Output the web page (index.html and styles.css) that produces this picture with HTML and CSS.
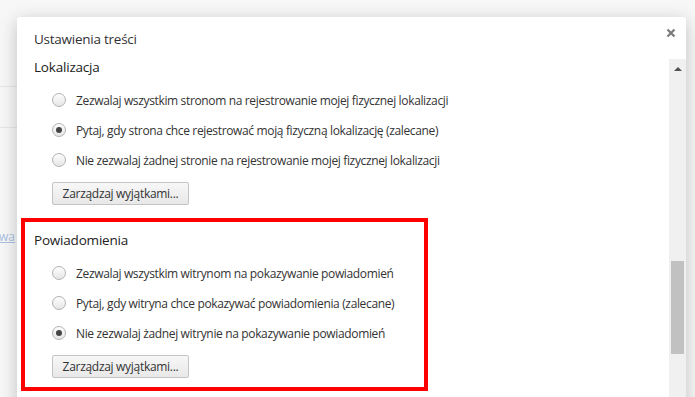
FILE: index.html
```html
<!DOCTYPE html>
<html lang="pl">
<head>
    <meta charset="UTF-8">
    <meta name="viewport" content="width=device-width, initial-scale=1.0">
    <title>Ustawienia treści</title>
    <link rel="stylesheet" href="styles.css">
</head>
<body>
    <div class="page">
        <div class="page-rule rule-1"></div>
        <div class="page-rule rule-2"></div>
        <a class="page-link" href="#">wa</a>
    </div>

    <div class="dialog">
        <div class="dialog-head">
            <h2>Ustawienia treści</h2>
            <button class="close" title="Zamknij">
                <svg width="10" height="10" viewBox="0 0 10 10">
                    <path d="M1.5 1.5l7 7M8.5 1.5l-7 7" stroke="currentColor" stroke-width="2.2" />
                </svg>
            </button>
        </div>
        <div class="dialog-body">
            <div class="content">
                <section class="group">
                    <h3>Lokalizacja</h3>
                    <label class="option"><span class="radio"></span>Zezwalaj wszystkim stronom na rejestrowanie mojej fizycznej lokalizacji</label>
                    <label class="option"><span class="radio checked"></span>Pytaj, gdy strona chce rejestrować moją fizyczną lokalizację (zalecane)</label>
                    <label class="option"><span class="radio"></span>Nie zezwalaj żadnej stronie na rejestrowanie mojej fizycznej lokalizacji</label>
                    <button class="manage">Zarządzaj wyjątkami...</button>
                </section>
                <section class="group">
                    <h3>Powiadomienia</h3>
                    <label class="option"><span class="radio"></span>Zezwalaj wszystkim witrynom na pokazywanie powiadomień</label>
                    <label class="option"><span class="radio"></span>Pytaj, gdy witryna chce pokazywać powiadomienia (zalecane)</label>
                    <label class="option"><span class="radio checked"></span>Nie zezwalaj żadnej witrynie na pokazywanie powiadomień</label>
                    <button class="manage">Zarządzaj wyjątkami...</button>
                </section>
            </div>
            <div class="scrollbar">
                <div class="scroll-up"></div>
                <div class="thumb"></div>
            </div>
        </div>
    </div>

    <div class="highlight"></div>
</body>
</html>
```

FILE: styles.css
```css
body {
    margin: 0;
    height: 100vh;
    overflow: hidden;
    background-color: #f7f7f7;
    font-family: "Open Sans", "Noto Sans", Arial, sans-serif;
    position: relative;
}

.page {
    height: 100%;
}

.page-rule {
    position: absolute;
    left: 0;
    width: 40px;
    height: 1px;
    background-color: #e6e6e6;
}

.rule-1 {
    top: 86px;
}

.rule-2 {
    top: 127px;
}

.page-link {
    position: absolute;
    left: -1px;
    top: 228px;
    font-size: 12px;
    color: #a9bfe0;
    text-decoration: underline;
}

.dialog {
    position: absolute;
    left: 17px;
    top: 17px;
    width: 669px;
    height: 420px;
    background-color: #fff;
    border-radius: 3px;
    box-shadow: 0 4px 18px rgba(0, 0, 0, 0.22);
    display: flex;
    flex-direction: column;
}

.dialog-head {
    height: 40px;
    padding: 0 10px 0 17px;
    display: flex;
    align-items: flex-start;
    justify-content: space-between;
}

    .dialog-head h2 {
        margin: 13px 0 0;
        font-size: 13.5px;
        letter-spacing: -0.25px;
        font-weight: normal;
        color: #333;
    }

.close {
    margin-top: 9px;
    border: none;
    background: none;
    padding: 0;
    color: #7a7a7a;
    cursor: pointer;
}

.dialog-body {
    flex: 1;
    display: flex;
}

.content {
    flex: 1;
    padding-left: 17px;
}

.group h3 {
    margin: 2px 0 10px;
    font-size: 13.5px;
    line-height: 16px;
    letter-spacing: -0.2px;
    font-weight: normal;
    color: #222;
}

.group + .group {
    margin-top: 27px;
}

.option {
    display: flex;
    align-items: center;
    height: 30px;
    padding-left: 18px;
    font-size: 12px;
    letter-spacing: -0.35px;
    color: #333;
}

.radio {
    width: 12px;
    height: 12px;
    margin-right: 10px;
    border: 1px solid #b2b2b2;
    border-radius: 50%;
    background: linear-gradient(#fdfdfd, #e6e6e6);
    display: flex;
    align-items: center;
    justify-content: center;
}

    .radio.checked::after {
        content: "";
        width: 6px;
        height: 6px;
        border-radius: 50%;
        background-color: #444;
    }

.manage {
    margin: 7px 0 0 18px;
    height: 23px;
    width: 137px;
    padding: 0;
    border: 1px solid #c4c4c4;
    border-radius: 2px;
    background: linear-gradient(#f7f7f7, #e8e8e8);
    font-family: inherit;
    font-size: 12px;
    letter-spacing: -0.3px;
    color: #333;
}

.scrollbar {
    width: 17px;
    margin-top: 2px;
    background-color: #f0f0f0;
}

.scroll-up {
    margin: 8px auto 0;
    width: 0;
    height: 0;
    border-left: 4px solid transparent;
    border-right: 4px solid transparent;
    border-bottom: 4px solid #505050;
}

.thumb {
    margin: 190px auto 0;
    width: 13px;
    height: 93px;
    background-color: #c1c1c1;
}

.highlight {
    position: absolute;
    left: 21px;
    top: 218px;
    width: 399px;
    height: 165px;
    border: 4px solid #ff0000;
}
```
